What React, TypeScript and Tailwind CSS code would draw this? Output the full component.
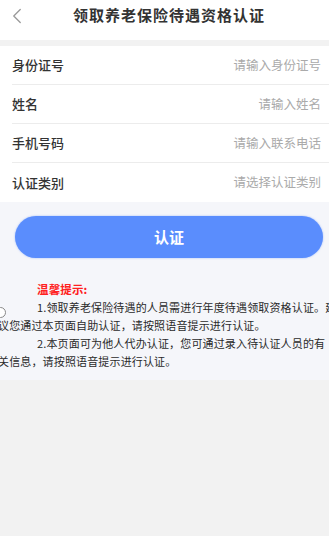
import { ChevronLeft } from "lucide-react";

const FIELDS: Array<{ label: string; placeholder: string }> = [
  { label: "身份证号", placeholder: "请输入身份证号" },
  { label: "姓名", placeholder: "请输入姓名" },
  { label: "手机号码", placeholder: "请输入联系电话" },
  { label: "认证类别", placeholder: "请选择认证类别" }
];

const font = { fontFamily: '"Noto Sans CJK SC", "Noto Sans", sans-serif' };

export default function App() {
  return (
    <div
      className="relative flex min-h-[536px] w-[329px] flex-col overflow-hidden bg-[#f2f2f2] text-[#333]"
      style={font}
    >
      <header className="relative flex h-10 justify-center bg-white pt-[4px]">
        <ChevronLeft
          className="absolute left-[4px] top-[3px] text-[#999]"
          size={26}
          strokeWidth={1.2}
        />
        <h1 className="pl-[9px] text-[15px] font-bold leading-[22px] tracking-[1px] text-[#333]">
          领取养老保险待遇资格认证
        </h1>
      </header>

      <div className="h-[6px] bg-[#f2f2f2]" />

      <section className="bg-white pl-3">
        {FIELDS.map((field, i) => (
          <div
            key={field.label}
            className={
              "flex h-[39px] items-center justify-between pr-2 " +
              (i < FIELDS.length - 1 ? "border-b border-[#ececec]" : "")
            }
          >
            <span className="text-[13px] font-medium text-[#333]">{field.label}</span>
            <span className="text-[12.5px] text-[#aaa]">{field.placeholder}</span>
          </div>
        ))}
      </section>

      <section className="relative bg-[#f5f6fa] pb-[10px] pt-[14px]">
        <div className="pl-[15px] pr-[6px]">
          <button className="flex h-[42px] w-full items-center justify-center rounded-full bg-[#5a8dfd] text-[15px] font-bold text-white shadow-[0_0_2px_rgba(90,141,253,0.6)]">
            认证
          </button>
        </div>

        <span className="absolute left-[-5px] top-[105px] h-[11px] w-[11px] rounded-full border border-[#888] bg-white" />

        <div className="mt-[22px] -ml-[2px] text-[11px] leading-[18px] tracking-[0.15px] text-[#2a2a2a]">
          <div className="pl-[39px] text-[11.5px] font-bold text-[#ff2020]">温馨提示:</div>
          <div className="whitespace-nowrap pl-[39px]">
            1.领取养老保险待遇的人员需进行年度待遇领取资格认证。建
          </div>
          <div className="whitespace-nowrap">议您通过本页面自助认证，请按照语音提示进行认证。</div>
          <div className="whitespace-nowrap pl-[39px]">
            2.本页面可为他人代办认证，您可通过录入待认证人员的有
          </div>
          <div className="whitespace-nowrap">关信息，请按照语音提示进行认证。</div>
        </div>
      </section>

      <div className="flex-1 bg-[#f2f2f2]" />
    </div>
  );
}
